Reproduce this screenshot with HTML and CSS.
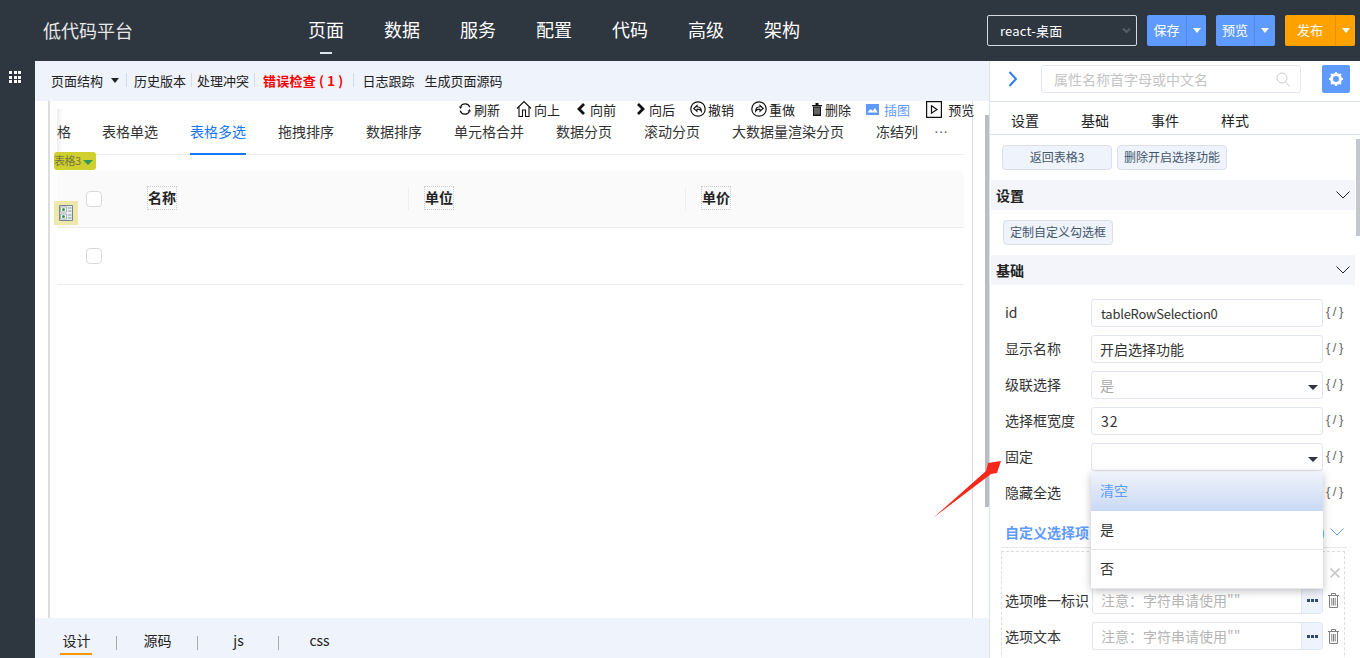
FILE: index.html
```html
<!DOCTYPE html>
<html lang="zh-CN">
<head>
    <meta charset="UTF-8">
    <meta name="viewport" content="width=device-width, initial-scale=1.0">
    <title>低代码平台</title>
    <link rel="stylesheet" href="styles.css">
</head>
<body>
    <header class="topbar">
        <div class="logo">低代码平台</div>
        <nav class="topnav">
            <a class="active">页面</a>
            <a>数据</a>
            <a>服务</a>
            <a>配置</a>
            <a>代码</a>
            <a>高级</a>
            <a>架构</a>
        </nav>
        <div class="top-actions">
            <div class="env-select">react-桌面
                <svg width="9" height="7" viewBox="0 0 9 7"><path d="M1 1.5l3.500 3.500L8 1.500" fill="none" stroke="#555d66" stroke-width="2"/></svg>
            </div>
            <div class="split-btn save"><span class="main">保存</span><span class="drop"><i></i></span></div>
            <div class="split-btn view"><span class="main">预览</span><span class="drop"><i></i></span></div>
            <div class="split-btn publish"><span class="main">发布</span><span class="drop"><i></i></span></div>
        </div>
    </header>

    <div class="workspace">
        <aside class="rail">
            <div class="rail-grid">
                <i></i><i></i><i></i><i></i><i></i><i></i><i></i><i></i><i></i>
            </div>
        </aside>

        <main class="center">
            <div class="toolbar">
                <span class="tool">页面结构<i class="caret"></i></span>
                <span class="tool-sep"></span>
                <span class="tool">历史版本</span>
                <span class="tool-sep"></span>
                <span class="tool">处理冲突</span>
                <span class="tool-sep"></span>
                <span class="tool error">错误检查 ( 1 )</span>
                <span class="tool-sep wide"></span>
                <span class="tool">日志跟踪</span>
                <span class="tool last">生成页面源码</span>
            </div>

            <div class="canvas">
                <div class="stage">
                    <div class="actions">
                        <span class="action a-refresh">
                            <svg width="12" height="12" viewBox="0 0 12 12"><path d="M10.800 4.200A5 5 0 0 0 1.600 3.600M1.200 7.800a5 5 0 0 0 9.200.6" fill="none" stroke="#111" stroke-width="1.200"/><path d="M0 3.600h3.400L1.400 6zM12 8.400H8.600L10.600 6z" fill="#111"/></svg>刷新
                        </span>
                        <span class="action a-up">
                            <svg width="16" height="18" viewBox="0 0 16 18"><path d="M1 8.500L8 1.500l7 7M3 7v9.500h3.500V10h3v6.500H13V7" fill="none" stroke="#111" stroke-width="1.100"/></svg>向上
                        </span>
                        <span class="action a-prev">
                            <svg width="10" height="12" viewBox="0 0 10 12"><path d="M8 1L3 6l5 5" fill="none" stroke="#111" stroke-width="2.800"/></svg>向前
                        </span>
                        <span class="action a-next">
                            <svg width="10" height="12" viewBox="0 0 10 12"><path d="M2 1l5 5-5 5" fill="none" stroke="#111" stroke-width="2.800"/></svg>向后
                        </span>
                        <span class="action a-undo">
                            <svg width="16" height="16" viewBox="0 0 16 16"><circle cx="8" cy="8" r="7.200" fill="none" stroke="#111" stroke-width="1.200"/><path d="M7 4.500L3.800 7.500 7 10.200V8.200c2-.2 3.400.4 4.400 2 0-2.800-1.800-4.400-4.400-4.500z" fill="none" stroke="#111" stroke-width="1.100"/></svg>撤销
                        </span>
                        <span class="action a-redo">
                            <svg width="16" height="16" viewBox="0 0 16 16"><circle cx="8" cy="8" r="7.200" fill="none" stroke="#111" stroke-width="1.200"/><path d="M9 4.500l3.200 3L9 10.200V8.200c-2-.2-3.400.4-4.400 2 0-2.800 1.800-4.400 4.400-4.500z" fill="none" stroke="#111" stroke-width="1.100"/></svg>重做
                        </span>
                        <span class="action a-del">
                            <svg width="10" height="13" viewBox="0 0 10 13"><path d="M0 2h10v1.200H0zM3.500 0h3v2h-3z" fill="#111"/><path d="M1 3.500h8V13H1z" fill="#111"/><path d="M3 4.500v7M5 4.500v7M7 4.500v7" stroke="#fff" stroke-width=".7"/></svg>删除
                        </span>
                        <span class="action a-pic blue">
                            <svg width="13" height="11" viewBox="0 0 13 11"><path d="M0 0h13v11H0z" fill="#5f9bff"/><path d="M1.500 8.500l3-3.500 2 2 2.500-3 2.500 4.500z" fill="#fff"/></svg>插图
                        </span>
                        <span class="action a-play">
                            <svg width="16" height="17" viewBox="0 0 16 17"><path d="M.6.600h14.800v15.800H.6z" fill="none" stroke="#111" stroke-width="1.200"/><path d="M5.500 4.800l5.500 3.700-5.500 3.700z" fill="none" stroke="#111" stroke-width="1.200"/></svg>预览
                        </span>
                    </div>

                    <div class="tabs">
                        <span class="tab cut">格</span>
                        <span class="tab">表格单选</span>
                        <span class="tab active">表格多选</span>
                        <span class="tab">拖拽排序</span>
                        <span class="tab">数据排序</span>
                        <span class="tab">单元格合并</span>
                        <span class="tab">数据分页</span>
                        <span class="tab">滚动分页</span>
                        <span class="tab">大数据量渲染分页</span>
                        <span class="tab">冻结列</span>
                        <span class="tab more">···</span>
                    </div>

                    <div class="data-table">
                        <div class="thead">
                            <div class="cell-check"><span class="checkbox"></span></div>
                            <div class="th"><b>名称</b></div>
                            <div class="th"><b>单位</b></div>
                            <div class="th"><b>单价</b></div>
                        </div>
                        <div class="trow">
                            <div class="cell-check"><span class="checkbox"></span></div>
                        </div>
                    </div>
                </div>

                <div class="comp-tag">表格3<i></i></div>
                <div class="comp-icon">
                    <svg width="14" height="16" viewBox="0 0 14 16"><path d="M.5.500h13v15H.5z" fill="#e8eef0" stroke="#77858c"/><path d="M1.500 2h6v5h-6zM1.500 9h6v5h-6z" fill="#fff" stroke="#77858c" stroke-width=".6"/><circle cx="4.500" cy="4.500" r="1.500" fill="#2f9a58"/><circle cx="4.500" cy="11.500" r="1.500" fill="#2f9a58"/><path d="M9 3h3.500M9 6h3.500M9 10h3.500M9 13h3.500" stroke="#8a9aa2"/></svg>
                </div>
                <div class="canvas-thumb"></div>
            </div>

            <div class="bottom-tabs">
                <span class="btab active">设计</span>
                <span class="btab">源码</span>
                <span class="btab">js</span>
                <span class="btab">css</span>
            </div>
        </main>

        <section class="props">
            <div class="props-search">
                <svg class="collapse" width="10" height="16" viewBox="0 0 10 16"><path d="M1.500 1l6.500 7-6.500 7" fill="none" stroke="#2f7df6" stroke-width="2"/></svg>
                <div class="search-box">属性名称首字母或中文名
                    <svg width="14" height="15" viewBox="0 0 14 15"><circle cx="6" cy="6" r="5" fill="none" stroke="#ccc"/><path d="M9.500 10l4 4.500" stroke="#ccc"/></svg>
                </div>
                <div class="gear-btn">
                    <svg width="14" height="14" viewBox="0 0 14 14"><circle cx="7" cy="7" r="4.500" fill="none" stroke="#fff" stroke-width="3"/><path d="M7 0v2.500M7 11.500V14M0 7h2.500M11.500 7H14M2 2l2 2M10 10l2 2M12 2l-2 2M4 10l-2 2" stroke="#fff" stroke-width="1.800"/></svg>
                </div>
            </div>
            <div class="props-tabs">
                <span>设置</span>
                <span>基础</span>
                <span>事件</span>
                <span>样式</span>
            </div>

            <div class="props-body">
                <div class="btn-row">
                    <span class="soft-btn">返回表格3</span>
                    <span class="soft-btn">删除开启选择功能</span>
                </div>
                <div class="section-head">设置
                    <svg width="14" height="8" viewBox="0 0 14 8"><path d="M.5.500L7 7l6.500-6.500" fill="none" stroke="#222"/></svg>
                </div>
                <div class="btn-row single">
                    <span class="soft-btn">定制自定义勾选框</span>
                </div>
                <div class="section-head">基础
                    <svg width="14" height="8" viewBox="0 0 14 8"><path d="M.5.500L7 7l6.500-6.500" fill="none" stroke="#222"/></svg>
                </div>

                <div class="form">
                    <div class="form-row">
                        <label>id</label>
                        <div class="field latin">tableRowSelection0</div>
                        <span class="code-mark">{/}</span>
                    </div>
                    <div class="form-row">
                        <label>显示名称</label>
                        <div class="field">开启选择功能</div>
                        <span class="code-mark">{/}</span>
                    </div>
                    <div class="form-row">
                        <label>级联选择</label>
                        <div class="field select muted">是<i></i></div>
                        <span class="code-mark">{/}</span>
                    </div>
                    <div class="form-row">
                        <label>选择框宽度</label>
                        <div class="field spaced">32</div>
                        <span class="code-mark">{/}</span>
                    </div>
                    <div class="form-row">
                        <label>固定</label>
                        <div class="field select open"><i></i>
                            <ul class="dropdown">
                                <li class="hover">清空</li>
                                <li>是</li>
                                <li>否</li>
                            </ul>
                        </div>
                        <span class="code-mark">{/}</span>
                    </div>
                    <div class="form-row">
                        <label>隐藏全选</label>
                        <div class="field"></div>
                        <span class="code-mark">{/}</span>
                    </div>
                </div>

                <div class="sub-head">自定义选择项
                    <span class="sub-right">(0)
                        <svg width="14" height="8" viewBox="0 0 14 8"><path d="M.5.500L7 7l6.500-6.500" fill="none" stroke="#5f9bff"/></svg>
                    </span>
                </div>
                <div class="option-box">
                    <div class="option-close">
                        <svg width="10" height="10" viewBox="0 0 10 10"><path d="M.5.500l9 9M9.500.500l-9 9" stroke="#c8c8c8" stroke-width="1.600"/></svg>
                    </div>
                    <div class="option-row">
                        <label>选项唯一标识</label>
                        <div class="addon-field"><span>注意：字符串请使用""</span>
                            <b><svg width="11" height="3" viewBox="0 0 11 3"><path d="M0 0h3v3H0zM4 0h3v3H4zM8 0h3v3H8z" fill="#2e4a70"/></svg></b>
                        </div>
                        <svg class="trash" width="11" height="15" viewBox="0 0 11 15"><path d="M0 2.500h11M3.500 2.500v-2h4v2M1.500 3v11.500h8V3M3.800 5v7.500M5.500 5v7.500M7.200 5v7.500" fill="none" stroke="#808080"/></svg>
                    </div>
                    <div class="option-row">
                        <label>选项文本</label>
                        <div class="addon-field"><span>注意：字符串请使用""</span>
                            <b><svg width="11" height="3" viewBox="0 0 11 3"><path d="M0 0h3v3H0zM4 0h3v3H4zM8 0h3v3H8z" fill="#2e4a70"/></svg></b>
                        </div>
                        <svg class="trash" width="11" height="15" viewBox="0 0 11 15"><path d="M0 2.500h11M3.500 2.500v-2h4v2M1.500 3v11.500h8V3M3.800 5v7.500M5.500 5v7.500M7.200 5v7.500" fill="none" stroke="#808080"/></svg>
                    </div>
                </div>
                <div class="props-thumb"></div>
            </div>
        </section>
    </div>

    <!-- red annotation arrow drawn over the screenshot -->
    <svg class="arrow" width="1360" height="658" viewBox="0 0 1360 658">
        <path d="M933 518L986 471 988 463 1001 461 997 473 991 474z" fill="#f5281c"/>
    </svg>
</body>
</html>
```

FILE: styles.css
```css
* {
    box-sizing: border-box;
}

html, body {
    height: 100%;
    margin: 0;
    overflow: hidden;
}

body {
    display: flex;
    flex-direction: column;
    font-family: "Noto Sans CJK SC", "Noto Sans", sans-serif;
    font-size: 14px;
    color: #222;
    background: #fff;
}

/* top bar */
.topbar {
    height: 61px;
    flex: none;
    display: flex;
    align-items: center;
    background: #2e363f;
    color: #fff;
    padding-left: 43px;
}

.logo {
    width: 265px;
    margin-top: -2px;
    font-size: 18px;
    color: #e8e8e8;
}

.topnav {
    display: flex;
    gap: 40px;
    margin-top: -3px;
}

.topnav a {
    position: relative;
    font-size: 18px;
    width: 36px;
    text-align: center;
}

.topnav a.active::after {
    content: "";
    position: absolute;
    left: 12px;
    top: 36px;
    width: 12px;
    height: 2px;
    background: #dde3ea;
}

.top-actions {
    margin-left: 187px;
    display: flex;
    gap: 10px;
}

.env-select {
    width: 150px;
    height: 31px;
    border: 1px solid #d5d9de;
    border-radius: 2px;
    padding-left: 12px;
    line-height: 29px;
    font-size: 13px;
    letter-spacing: .2px;
    display: flex;
    justify-content: space-between;
    align-items: center;
    padding-right: 5px;
}

.split-btn {
    height: 31px;
    display: flex;
    border-radius: 2px;
    font-size: 13px;
    line-height: 30px;
    background: #5f9bff;
    color: #fff;
}

.split-btn .main {
    width: 39px;
    text-align: center;
}

.split-btn .drop {
    width: 20px;
    display: flex;
    align-items: center;
    justify-content: center;
    border-left: 1px solid #5288e6;
}

.split-btn .drop i {
    border: 4px solid transparent;
    border-top: 5px solid #fff;
    border-bottom: 0;
    width: 0;
}

.split-btn.view .main {
    width: 38px;
}

.split-btn.view .drop {
    width: 21px;
}

.split-btn.publish {
    background: #ffa200;
}

.split-btn.publish .main {
    width: 50px;
}

.split-btn.publish .drop {
    border-left-color: #e8920a;
}

/* layout */
.workspace {
    flex: 1;
    display: flex;
    min-height: 0;
}

.rail {
    width: 35px;
    flex: none;
    background: #2e363f;
    padding: 10px 0 0 9px;
}

.rail-grid {
    width: 12px;
    display: grid;
    grid-template-columns: repeat(3, 3px);
    gap: 1.500px;
}

.rail-grid i {
    height: 3px;
    background: #fff;
}

.center {
    width: 954px;
    flex: none;
    display: flex;
    flex-direction: column;
}

/* page toolbar */
.toolbar {
    height: 40px;
    flex: none;
    display: flex;
    align-items: center;
    background: #eff3fb;
    padding: 0 0 2px 16px;
    font-size: 13px;
    color: #222;
}

.tool-sep {
    width: 1px;
    height: 14px;
    background: #d8dbe0;
    margin: 0 5px;
}

.tool-sep:nth-of-type(2) {
    margin: 0 7px 0 6px;
}

.tool-sep.wide {
    margin: 0 8px 0 10px;
}

.tool.error {
    color: #f00;
    font-weight: bold;
    letter-spacing: .2px;
    margin-left: 3px;
}

.tool.last {
    margin-left: 10px;
}

.caret {
    display: inline-block;
    width: 0;
    margin: 0 1px 2px 8px;
    border: 4px solid transparent;
    border-top: 5px solid #222;
    border-bottom: 0;
    vertical-align: middle;
}

/* canvas */
.canvas {
    position: relative;
    flex: 1;
    min-height: 0;
    padding-left: 13px;
    background: #fff;
}

.stage {
    width: 925px;
    height: 100%;
    border-left: 2px solid #ddd;
    border-right: 1px solid #ddd;
    padding-left: 7px;
    padding-right: 7px;
}

.actions {
    height: 16px;
    display: flex;
    align-items: center;
    font-size: 13px;
    color: #222;
    position: relative;
}

.action {
    display: flex;
    align-items: center;
    white-space: nowrap;
}

.action svg {
    flex: none;
}

.action.blue {
    color: #5f9bff;
}

.a-refresh { margin-left: 402px; }
.a-refresh svg { margin-right: 3px; }
.a-up { margin-left: 16px; }
.a-up svg { margin-right: 2px; }
.a-prev { margin-left: 16px; }
.a-prev svg { margin-right: 4px; }
.a-next { margin-left: 20px; }
.a-next svg { margin-right: 3px; }
.a-undo { margin-left: 15px; }
.a-undo svg { margin-right: 2px; }
.a-redo { margin-left: 17px; }
.a-redo svg { margin-right: 2px; }
.a-del { margin-left: 17px; }
.a-del svg { margin-right: 3px; }
.a-pic { margin-left: 15px; }
.a-pic svg { margin-right: 5px; }
.a-play { margin-left: 16px; }
.a-play svg { margin-right: 6px; }

.tabs {
    position: relative;
    height: 38px;
    width: 907px;
    display: flex;
    gap: 32px;
    border-bottom: 1px solid #ececec;
    font-size: 14px;
    line-height: 29px;
    color: #333;
    white-space: nowrap;
}

.tabs::before {
    content: "";
    position: absolute;
    left: 0;
    top: -8px;
    bottom: 1px;
    width: 6px;
    background: linear-gradient(to right, #eee, rgba(255, 255, 255, 0));
}

.tab {
    position: relative;
    height: 38px;
}

.tab.cut {
    margin-right: -1px;
}

.tab.active {
    color: #1677ff;
}

.tab.active::after {
    content: "";
    position: absolute;
    left: 0;
    right: 0;
    bottom: 0;
    height: 2px;
    background: #1677ff;
}

.tab.more {
    margin-left: -16px;
    color: #555;
    font-family: "Liberation Sans", sans-serif;
    font-size: 14px;
}

.data-table {
    width: 907px;
    margin-top: 16px;
}

.thead {
    height: 57px;
    display: grid;
    grid-template-columns: 74px 277px 277px 1fr;
    align-items: center;
    background: #fafafa;
    border-bottom: 1px solid #eee;
    border-radius: 6px 6px 0 0;
}

.trow {
    height: 57px;
    display: flex;
    align-items: center;
    border-bottom: 1px solid #eee;
}

.cell-check {
    width: 74px;
    padding-left: 29px;
    display: flex;
}

.checkbox {
    width: 16px;
    height: 16px;
    background: #fff;
    border: 1px solid #d9d9d9;
    border-radius: 4px;
}

.th {
    height: 22px;
    display: flex;
    align-items: center;
    padding-left: 16px;
    position: relative;
}

.th + .th::before {
    content: "";
    position: absolute;
    left: 0;
    top: 0;
    width: 1px;
    height: 22px;
    background: #eee;
}

.th b {
    border: 1px dotted #ccc;
    width: 30px;
    height: 24px;
    margin-top: -2px;
    line-height: 20px;
    font-size: 14px;
    color: #222;
    white-space: nowrap;
}

.comp-tag {
    position: absolute;
    left: 19px;
    top: 51px;
    width: 42px;
    height: 18px;
    background: #cfcf30;
    border-radius: 3px;
    font-size: 11px;
    letter-spacing: -.5px;
    line-height: 16px;
    color: #77783a;
    white-space: nowrap;
}

.comp-tag i {
    display: inline-block;
    margin-left: 2px;
    border: 5px solid transparent;
    border-top: 5px solid #2f9a58;
    border-bottom: 0;
    vertical-align: middle;
}

.comp-icon {
    position: absolute;
    left: 19px;
    top: 100px;
    width: 24px;
    height: 24px;
    background: #eee8aa;
    display: flex;
    align-items: center;
    justify-content: center;
}

.canvas-thumb {
    position: absolute;
    right: 0;
    top: 14px;
    width: 4px;
    height: 392px;
    background: #b9bdc4;
}

/* bottom tabs */
.bottom-tabs {
    height: 40px;
    flex: none;
    display: flex;
    background: #eff3fb;
    padding-left: 1px;
    color: #222;
    font-size: 14px;
}

.btab {
    position: relative;
    width: 81px;
    text-align: center;
    line-height: 45px;
}

.btab + .btab::before {
    content: "";
    position: absolute;
    left: -1px;
    top: 18px;
    width: 1px;
    height: 14px;
    background: #aaa;
}

.btab.active::after {
    content: "";
    position: absolute;
    left: 24px;
    top: 35px;
    width: 32px;
    height: 2px;
    background: #ff9800;
}

/* property panel */
.props {
    flex: 1;
    min-width: 0;
    display: flex;
    flex-direction: column;
    border-left: 1px solid #dde3ea;
    background: #fff;
}

.props-search {
    height: 41px;
    flex: none;
    display: flex;
    align-items: center;
    padding: 1px 10px 5px 18px;
    border-bottom: 1px solid #dde3ea;
}

.collapse {
    flex: none;
}

.search-box {
    width: 260px;
    height: 28px;
    margin-left: 23px;
    border: 1px solid #e3e8f0;
    border-radius: 3px;
    padding: 0 10px 0 12px;
    display: flex;
    align-items: center;
    justify-content: space-between;
    color: #c4c4c4;
    font-size: 14px;
}

.gear-btn {
    width: 28px;
    height: 28px;
    margin-left: 21px;
    background: #5f9bff;
    border-radius: 2px;
    display: flex;
    align-items: center;
    justify-content: center;
}

.props-tabs {
    height: 33px;
    flex: none;
    display: flex;
    gap: 42px;
    padding-left: 21px;
    line-height: 37px;
    border-bottom: 1px solid #dde3ea;
    font-size: 14px;
    color: #222;
}

.props-body {
    position: relative;
    flex: 1;
    min-height: 0;
    overflow: hidden;
}

.btn-row {
    display: flex;
    gap: 5px;
    padding: 10px 0 10px 12px;
}

.btn-row.single {
    padding-left: 13px;
}

.soft-btn {
    width: 110px;
    height: 25px;
    background: #eff3fb;
    border: 1px solid #dcdfe6;
    border-radius: 4px;
    color: #44566c;
    font-size: 12px;
    line-height: 22px;
    text-align: center;
    white-space: nowrap;
}

.section-head {
    width: 364px;
    height: 30px;
    margin-left: 1px;
    background: #f3f5fa;
    padding: 0 5px;
    display: flex;
    align-items: center;
    justify-content: space-between;
    font-weight: bold;
    color: #222;
}

.form {
    padding: 14px 0 0 15px;
}

.form-row {
    height: 28px;
    margin-bottom: 8px;
    display: flex;
    align-items: center;
}

.form-row label {
    width: 86px;
    flex: none;
    margin-top: -2px;
    color: #333;
}

.field {
    position: relative;
    width: 232px;
    height: 28px;
    border: 1px solid #e0e5ee;
    border-radius: 3px;
    padding-left: 8px;
    line-height: 27px;
    color: #333;
}

.field.latin {
    padding-left: 9px;
    font-size: 13px;
    letter-spacing: -.25px;
}

.field.spaced {
    padding-left: 9px;
    letter-spacing: 1px;
}

.field.muted {
    color: #aaa;
}

.field.select > i {
    position: absolute;
    right: 4px;
    top: 13px;
    border: 5px solid transparent;
    border-top: 5px solid #2e363f;
    border-bottom: 0;
}

.code-mark {
    margin: -4px 0 0 3px;
    font-family: "Liberation Sans", sans-serif;
    font-size: 13px;
    letter-spacing: 2.500px;
    color: #666;
    white-space: nowrap;
}

.dropdown {
    position: absolute;
    z-index: 5;
    left: -1px;
    top: 28px;
    width: 232px;
    margin: 0;
    padding: 0;
    list-style: none;
    background: #fff;
    box-shadow: 0 2px 8px rgba(0, 0, 0, 0.25);
    color: #333;
}

.dropdown li {
    height: 39px;
    padding-left: 9px;
    line-height: 37px;
    border-bottom: 1px solid #e3e6ec;
}

.dropdown li.hover {
    color: #5f9bff;
    border-bottom: 0;
    background: linear-gradient(to bottom, #eff3fb, #c9d9f5);
}

.sub-head {
    width: 346px;
    height: 30px;
    margin: 11px 0 0 11px;
    padding: 0 3px 2px 4px;
    display: flex;
    align-items: center;
    justify-content: space-between;
    border-bottom: 1px solid #e6e8ee;
    color: #5f9bff;
    font-weight: bold;
    white-space: nowrap;
}

.sub-right {
    display: flex;
    align-items: center;
    gap: 5px;
    font-weight: normal;
}

.option-box {
    width: 344px;
    height: 140px;
    margin: 3px 0 0 11px;
    border: 1px dashed #ddd;
    border-bottom: 0;
    padding-left: 3px;
}

.option-close {
    height: 34px;
    padding: 16px 0 0 325px;
    display: flex;
}

.option-row {
    height: 28px;
    margin-bottom: 8px;
    display: flex;
    align-items: center;
}

.option-row label {
    width: 87px;
    flex: none;
    color: #333;
    white-space: nowrap;
}

.addon-field {
    width: 231px;
    height: 28px;
    display: flex;
    justify-content: space-between;
    border: 1px solid #e0e5ee;
    border-radius: 3px;
    color: #b5b5b5;
    line-height: 27px;
    padding-left: 8px;
    white-space: nowrap;
}

.addon-field b {
    width: 21px;
    flex: none;
    background: #eff3fb;
    border-left: 1px solid #e0e5ee;
    display: flex;
    align-items: center;
    justify-content: center;
}

.trash {
    margin-left: 5px;
    flex: none;
}

.props-thumb {
    position: absolute;
    right: 0;
    top: 4px;
    width: 4px;
    height: 97px;
    background: #c4c7cc;
}

.arrow {
    position: absolute;
    left: 0;
    top: 0;
    pointer-events: none;
}
```
